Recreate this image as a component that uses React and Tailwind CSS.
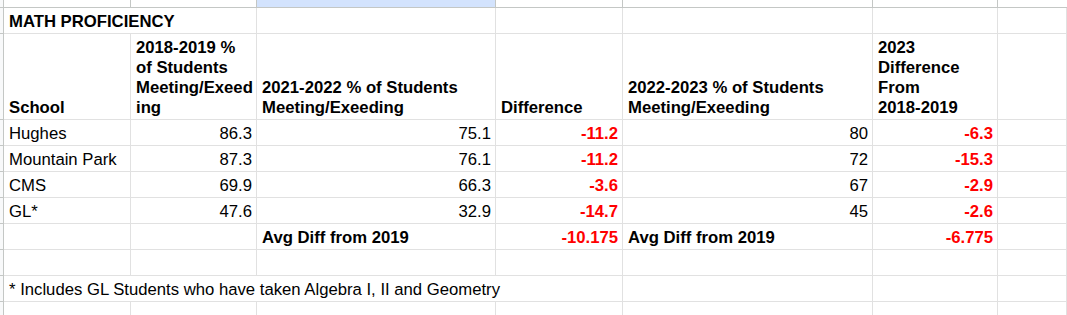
import React from "react";

const W = [
  "w-[127px]",
  "w-[126px]",
  "w-[239px]",
  "w-[127px]",
  "w-[250px]",
  "w-[125px]",
  "flex-1",
];

function Cell({ i, children, right, bold, red, noR, nowrap }) {
  return (
    <div
      className={[
        W[i],
        "shrink-0 min-w-0 flex items-end pb-[1px] pl-[5px] pr-[4px] border-b border-[#e1e1e1] leading-[20px] overflow-visible",
        noR ? "" : "border-r",
        right ? "justify-end" : "",
        bold ? "font-bold" : "",
        red ? "text-[#ff0000]" : "text-black",
        nowrap ? "whitespace-nowrap" : "",
      ].join(" ")}
    >
      {children}
    </div>
  );
}

function RowHdr() {
  return <div className="w-[4px] shrink-0 bg-[#f8f9fa] border-r border-b border-[#c4c7c5]" />;
}

function DataRow({ name, b, c, d, e, f }) {
  return (
    <div className="flex h-[26px]">
      <RowHdr />
      <Cell i={0}>{name}</Cell>
      <Cell i={1} right>{b}</Cell>
      <Cell i={2} right>{c}</Cell>
      <Cell i={3} right bold red>{d}</Cell>
      <Cell i={4} right>{e}</Cell>
      <Cell i={5} right bold red>{f}</Cell>
      <Cell i={6} />
    </div>
  );
}

export default function App() {
  const rows = [
    { name: "Hughes", b: "86.3", c: "75.1", d: "-11.2", e: "80", f: "-6.3" },
    { name: "Mountain Park", b: "87.3", c: "76.1", d: "-11.2", e: "72", f: "-15.3" },
    { name: "CMS", b: "69.9", c: "66.3", d: "-3.6", e: "67", f: "-2.9" },
    { name: "GL*", b: "47.6", c: "32.9", d: "-14.7", e: "45", f: "-2.6" },
  ];
  return (
    <div className="w-[1067px] h-[315px] overflow-hidden bg-white font-['Liberation_Sans',Arial,sans-serif] text-[16.7px]">
      {/* column header strip */}
      <div className="flex h-[8px]">
        <div className="w-[4px] shrink-0 bg-[#f8f9fa] border-r border-b border-[#c4c7c5]" />
        <div className="w-[127px] shrink-0 border-r border-b border-[#c4c7c5]" />
        <div className="w-[126px] shrink-0 border-r border-b border-[#c4c7c5]" />
        <div className="w-[239px] shrink-0 bg-[#d3e3fd] border-r border-b border-[#c4c7c5]" />
        <div className="w-[127px] shrink-0 border-r border-b border-[#c4c7c5]" />
        <div className="w-[250px] shrink-0 border-r border-b border-[#c4c7c5]" />
        <div className="w-[125px] shrink-0 border-r border-b border-[#c4c7c5]" />
        <div className="flex-1 border-b border-[#c4c7c5]" />
      </div>

      {/* title row */}
      <div className="flex h-[26px]">
        <RowHdr />
        <Cell i={0} bold noR nowrap>MATH PROFICIENCY</Cell>
        <Cell i={1} />
        <Cell i={2} />
        <Cell i={3} />
        <Cell i={4} />
        <Cell i={5} />
        <Cell i={6} />
      </div>

      {/* header row */}
      <div className="flex h-[86px]">
        <RowHdr />
        <Cell i={0} bold>School</Cell>
        <Cell i={1} bold>
          <div>
            2018-2019 %<br />
            of Students<br />
            Meeting/Exeed<br />
            ing
          </div>
        </Cell>
        <Cell i={2} bold>
          <div>
            2021-2022 % of Students<br />
            Meeting/Exeeding
          </div>
        </Cell>
        <Cell i={3} bold>Difference</Cell>
        <Cell i={4} bold>
          <div>
            2022-2023 % of Students<br />
            Meeting/Exeeding
          </div>
        </Cell>
        <Cell i={5} bold>
          <div>
            2023<br />
            Difference<br />
            From<br />
            2018-2019
          </div>
        </Cell>
        <Cell i={6} />
      </div>

      {rows.map((r) => (
        <DataRow key={r.name} {...r} />
      ))}

      {/* average row */}
      <div className="flex h-[26px]">
        <RowHdr />
        <Cell i={0} />
        <Cell i={1} />
        <Cell i={2} bold>Avg Diff from 2019</Cell>
        <Cell i={3} right bold red>-10.175</Cell>
        <Cell i={4} bold>Avg Diff from 2019</Cell>
        <Cell i={5} right bold red>-6.775</Cell>
        <Cell i={6} />
      </div>

      {/* empty row */}
      <div className="flex h-[26px]">
        <RowHdr />
        <Cell i={0} />
        <Cell i={1} />
        <Cell i={2} />
        <Cell i={3} />
        <Cell i={4} />
        <Cell i={5} />
        <Cell i={6} />
      </div>

      {/* footnote row */}
      <div className="flex h-[26px]">
        <RowHdr />
        <Cell i={0} noR nowrap>* Includes GL Students who have taken Algebra I, II and Geometry</Cell>
        <Cell i={1} noR />
        <Cell i={2} noR />
        <Cell i={3} />
        <Cell i={4} />
        <Cell i={5} />
        <Cell i={6} />
      </div>

      {/* empty row */}
      <div className="flex h-[26px]">
        <RowHdr />
        <Cell i={0} />
        <Cell i={1} />
        <Cell i={2} />
        <Cell i={3} />
        <Cell i={4} />
        <Cell i={5} />
        <Cell i={6} />
      </div>
    </div>
  );
}
